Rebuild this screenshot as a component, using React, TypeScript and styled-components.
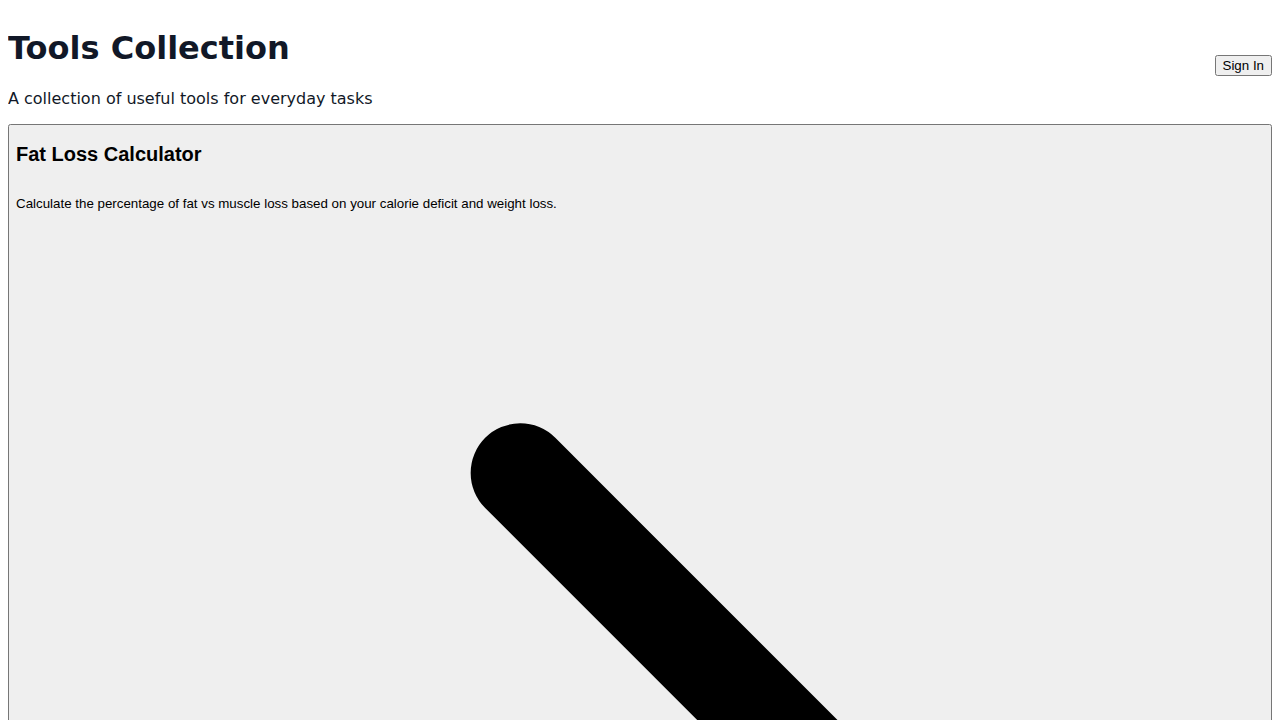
import React from "react";
import styled, { createGlobalStyle } from "styled-components";

const GlobalStyle = createGlobalStyle`
  body {
    margin: 8px;
    background: #ffffff;
    color: #111827;
    font-family: "DejaVu Sans", sans-serif;
    font-size: 16px;
  }
`;

const Header = styled.header`
  display: flex;
  align-items: center;
  justify-content: space-between;
`;

const Title = styled.h1`
  font-size: 32px;
  font-weight: 700;
`;

const Tagline = styled.p`
  font-size: 16px;
`;

const Button = styled.button`
  font-family: "Liberation Sans", Arial, sans-serif;
`;

const ToolGrid = styled.main`
  display: grid;
`;

const ToolCard = styled(Button)`
  text-align: left;
`;

const CardBody = styled.div`
  display: flex;
  flex-direction: column;
`;

const CardTitle = styled.h2`
  font-size: 20px;
  font-weight: 700;
`;

const CardText = styled.p`
  font-weight: 400;
`;

const CardAction = styled.div`
  display: flex;
  align-items: center;
  padding-left: 58px;
`;

const Chevron = styled.svg`
  display: block;
  flex: 1;
  min-width: 0;
`;

type Tool = { name: string; description: string };

const tools: Tool[] = [
  {
    name: "Fat Loss Calculator",
    description:
      "Calculate the percentage of fat vs muscle loss based on your calorie deficit and weight loss.",
  },
];

export default function App() {
  return (
    <>
      <GlobalStyle />
      <Header>
        <div>
          <Title>Tools Collection</Title>
          <Tagline>A collection of useful tools for everyday tasks</Tagline>
        </div>
        <Button type="button">Sign In</Button>
      </Header>
      <ToolGrid>
        {tools.map((tool) => (
          <ToolCard type="button" key={tool.name}>
            <CardBody>
              <CardTitle>{tool.name}</CardTitle>
              <CardText>{tool.description}</CardText>
              <CardAction>
                <Chevron
                  viewBox="0 0 24 24"
                  fill="none"
                  stroke="currentColor"
                  strokeWidth={2}
                  strokeLinecap="round"
                  strokeLinejoin="round"
                  aria-hidden="true"
                >
                  <path d="M9 5l7 7-7 7" />
                </Chevron>
              </CardAction>
            </CardBody>
          </ToolCard>
        ))}
      </ToolGrid>
    </>
  );
}
